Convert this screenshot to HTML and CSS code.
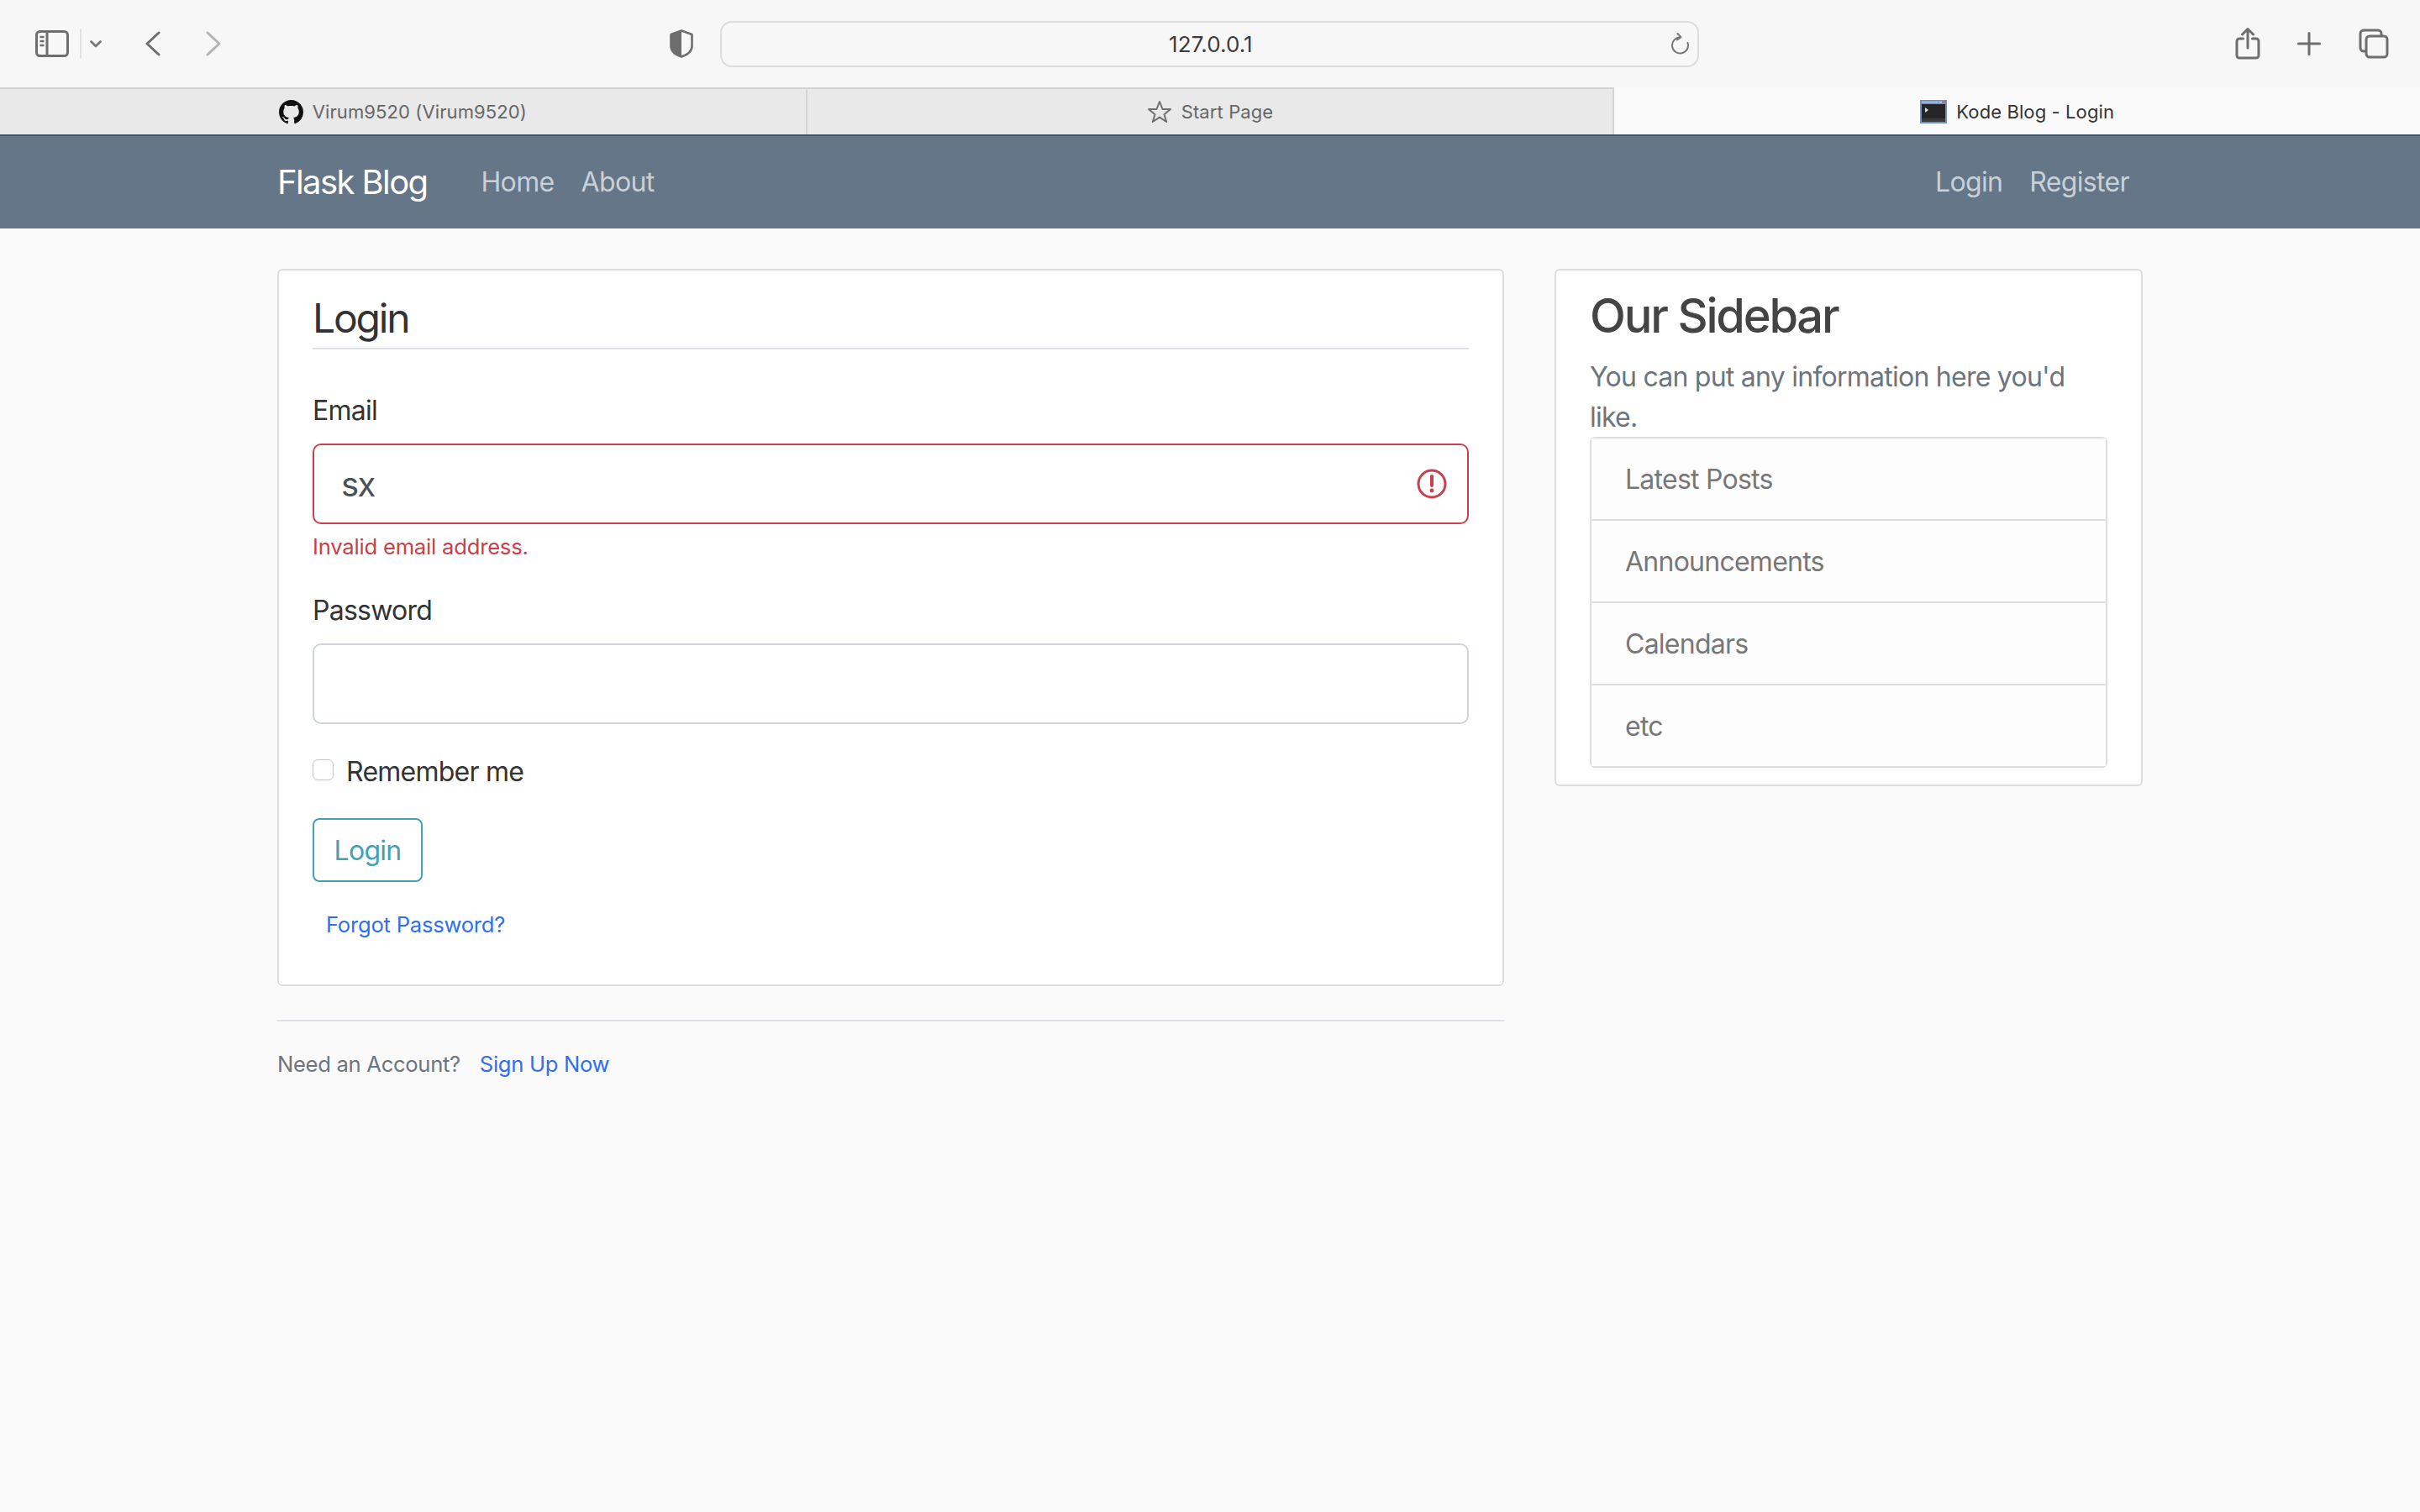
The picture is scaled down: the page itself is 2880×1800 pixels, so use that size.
FILE: index.html
```html
<!DOCTYPE html>
<html lang="en">
<head>
<meta charset="utf-8">
<title>Kode Blog - Login</title>
<link rel="stylesheet" href="styles.css">
</head>
<body>
<header class="toolbar">
  <svg class="ic ic-side" width="40" height="32" viewBox="0 0 40 32" fill="none" stroke="#6e6e6e" stroke-width="3"><rect x="1.5" y="1.5" width="37" height="29" rx="4"/><path d="M14 2v28"/><path d="M5.5 8h5M5.5 13h5M5.5 18h5" stroke-width="2.4"/></svg>
  <span class="tool-div"></span>
  <svg class="ic ic-chev" width="14" height="9" viewBox="0 0 14 9" fill="none" stroke="#777" stroke-width="2.6" stroke-linecap="round" stroke-linejoin="round"><path d="M1.5 1.5 7 7l5.5-5.5"/></svg>
  <svg class="ic ic-back" width="18" height="30" viewBox="0 0 18 30" fill="none" stroke="#6e6e6e" stroke-width="3" stroke-linecap="round" stroke-linejoin="round"><path d="M16 2 2 15l14 13"/></svg>
  <svg class="ic ic-fwd" width="18" height="30" viewBox="0 0 18 30" fill="none" stroke="#b4b4b4" stroke-width="3" stroke-linecap="round" stroke-linejoin="round"><path d="M2 2l14 13L2 28"/></svg>
  <svg class="ic ic-shield" width="28" height="34" viewBox="0 0 28 34"><path d="M14 1.5 26.5 6v14c0 6-5 10-12.500 12.500C6.500 30 1.500 26 1.500 20V6z" fill="none" stroke="#6e6e6e" stroke-width="2.600" stroke-linejoin="round"/><path d="M14 1.500 1.500 6v14c0 6 5 10 12.500 12.500z" fill="#6e6e6e"/></svg>
  <div class="urlbar">
    <span class="url">127.0.0.1</span>
    <svg class="ic-reload" width="24" height="26" viewBox="0 0 24 26" fill="none" stroke="#777" stroke-width="2" stroke-linecap="round" stroke-linejoin="round"><path d="M12.500 5.500A9.500 9.500 0 1 0 21.500 12"/><path d="M9.500 1l4 4.300-4.500 3.200"/></svg>
  </div>
  <svg class="ic ic-share" width="30" height="38" viewBox="0 0 30 38" fill="none" stroke="#6e6e6e" stroke-width="3" stroke-linecap="round" stroke-linejoin="round"><path d="M9.500 13H5a3 3 0 0 0-3 3v17a3 3 0 0 0 3 3h20a3 3 0 0 0 3-3V16a3 3 0 0 0-3-3h-4.500"/><path d="M15 24V2M8.500 8 15 1.500 21.500 8"/></svg>
  <svg class="ic ic-plus" width="28" height="28" viewBox="0 0 28 28" fill="none" stroke="#6e6e6e" stroke-width="3" stroke-linecap="round"><path d="M14 1.500v25M1.500 14h25"/></svg>
  <svg class="ic ic-tabs" width="36" height="36" viewBox="0 0 36 36" fill="none" stroke="#6e6e6e" stroke-width="3" stroke-linejoin="round"><path d="M8 27H6a4 4 0 0 1-4-4V6a4 4 0 0 1 4-4h17a4 4 0 0 1 4 4v2"/><rect x="9" y="9" width="25" height="25" rx="4"/></svg>
</header>

<nav class="tabbar">
  <div class="tab">
    <svg class="fav" width="29" height="29" viewBox="0 0 16 16"><path fill="#111" d="M8 0C3.580 0 0 3.580 0 8c0 3.540 2.290 6.530 5.470 7.590.4.070.55-.17.55-.38 0-.19-.01-.82-.01-1.490-2.010.37-2.530-.49-2.690-.94-.09-.23-.48-.94-.82-1.130-.28-.15-.68-.52-.01-.53.63-.01 1.080.58 1.230.82.72 1.210 1.870.87 2.330.66.07-.52.28-.87.51-1.070-1.780-.2-3.640-.89-3.640-3.950 0-.87.31-1.590.82-2.150-.08-.2-.36-1.020.08-2.120 0 0 .67-.21 2.200.82.64-.18 1.320-.27 2-.27.68 0 1.360.09 2 .27 1.530-1.040 2.200-.82 2.200-.82.44 1.100.16 1.920.08 2.120.51.56.82 1.270.82 2.150 0 3.070-1.870 3.750-3.650 3.950.29.25.54.73.54 1.480 0 1.070-.01 1.930-.01 2.200 0 .21.15.46.55.38A8.013 8.013 0 0 0 16 8c0-4.420-3.580-8-8-8z"/></svg>
    <span>Virum9520 (Virum9520)</span>
  </div>
  <div class="tab">
    <svg class="fav" width="30" height="28" viewBox="0 0 30 28" fill="none" stroke="#6e6e6e" stroke-width="2" stroke-linejoin="round"><path d="M15 2l3.600 9H28l-7.500 6.200L23.200 26 15 20.600 6.800 26l2.700-8.800L2 11h9.400z"/></svg>
    <span>Start Page</span>
  </div>
  <div class="tab tab-active">
    <svg class="fav" width="32" height="28" viewBox="0 0 32 28"><rect width="32" height="28" fill="#6f8fc9"/><rect x="2" y="5" width="28" height="21" fill="#262626"/><rect x="2" y="1.500" width="20" height="2" fill="#a7bde2"/><rect x="23" y="1.500" width="3" height="2" fill="#c3cde0"/><rect x="27" y="1.500" width="3" height="2" fill="#d9655e"/><rect x="2" y="22" width="28" height="4" fill="#3d3d3d"/><path d="M6 9l4 3-4 3z" fill="#ddd"/></svg>
    <span>Kode Blog - Login</span>
  </div>
</nav>

<div class="navbar">
  <div class="nav-inner">
    <a class="brand">Flask Blog</a>
    <a class="nav-link">Home</a>
    <a class="nav-link">About</a>
    <span class="nav-gap"></span>
    <a class="nav-link">Login</a>
    <a class="nav-link">Register</a>
  </div>
</div>

<main class="layout">
  <section class="col-main">
    <form class="card">
      <h2 class="legend">Login</h2>
      <div class="group">
        <label class="label">Email</label>
        <div class="input-wrap">
          <input class="input input-invalid" type="text" value="sx">
          <svg class="invalid-ic" width="36" height="36" viewBox="0 0 36 36"><circle cx="18" cy="18" r="16" fill="none" stroke="#c9404a" stroke-width="3"/><path d="M18 9v11" stroke="#c9404a" stroke-width="4" stroke-linecap="round"/><circle cx="18" cy="26" r="2.400" fill="#c9404a"/></svg>
        </div>
        <div class="feedback">Invalid email address.</div>
      </div>
      <div class="group">
        <label class="label">Password</label>
        <input class="input" type="password">
      </div>
      <div class="group check">
        <input class="checkbox" type="checkbox">
        <label class="check-label">Remember me</label>
      </div>
      <div class="group">
        <button class="btn" type="button">Login</button>
      </div>
      <div class="forgot"><a class="link">Forgot Password?</a></div>
    </form>
    <div class="signup">
      <span>Need an Account?</span>
      <a class="link signup-link">Sign Up Now</a>
    </div>
  </section>
  <aside class="col-side">
    <div class="card">
      <h3 class="side-title">Our Sidebar</h3>
      <p class="side-text">You can put any information here you'd like.</p>
      <ul class="list">
        <li class="list-item">Latest Posts</li>
        <li class="list-item">Announcements</li>
        <li class="list-item">Calendars</li>
        <li class="list-item">etc</li>
      </ul>
    </div>
  </aside>
</main>
</body>
</html>
```

FILE: styles.css
```css
* { box-sizing: border-box; }
html, body { margin: 0; padding: 0; }
body {
  background: #fafafa;
  color: #333;
  font-family: Inter, "Liberation Sans", sans-serif;
  font-size: 32px;
  line-height: 48px;
  letter-spacing: -0.75px;
  min-height: 1800px;
}

/* browser chrome */
.toolbar {
  height: 104px;
  background: #f7f7f7;
  display: flex;
  align-items: center;
  padding-left: 42px;
}
.ic { display: block; flex: none; }
.tool-div { width: 2px; height: 36px; background: #e4e4e4; margin-left: 13px; }
.ic-chev { margin-left: 10px; }
.ic-back { margin-left: 52px; }
.ic-fwd { margin-left: 54px; }
.ic-shield { margin-left: 534px; }
.urlbar {
  width: 1165px;
  height: 55px;
  margin-left: 32px;
  border: 2px solid #dcdcdc;
  border-radius: 14px;
  display: flex;
  align-items: center;
  justify-content: space-between;
  padding-left: 532px;
  padding-right: 9px;
}
.url { font-size: 26px; line-height: 30px; padding-top: 1px; color: #3c3c3c; letter-spacing: 0.1px; }
.ic-share { margin-left: 638px; }
.ic-plus { margin-left: 44px; }
.ic-tabs { margin-left: 45px; }

.tabbar { height: 56px; display: flex; }
.tab {
  flex: 1;
  display: flex;
  align-items: center;
  justify-content: center;
  gap: 11px;
  background: #e9e9e9;
  border-top: 2px solid #d2d2d2;
  border-right: 2px solid #d4d4d4;
  font-size: 22px;
  line-height: 30px;
  letter-spacing: 0.1px;
  color: #666;
}
.tab-active {
  background: #fafafa;
  border: 0;
  color: #333;
  padding-top: 1px;
}

.navbar {
  height: 112px;
  background: #647687;
  border-top: 2px solid #41566b;
}
.nav-inner {
  width: 2220px;
  height: 110px;
  margin: 0 auto;
  display: flex;
  align-items: center;
}
.brand { font-size: 40px; line-height: 60px; color: #fff; font-weight: 400; letter-spacing: -1.6px; margin-right: 48px; }
.nav-link { font-size: 32px; padding: 0 16px; color: #c9d0d6; letter-spacing: -0.65px; }
.nav-gap { flex: 1; }

/* page */
.layout {
  width: 2220px;
  margin: 48px auto 0;
  display: flex;
  gap: 60px;
  align-items: flex-start;
}
.col-main { width: 1460px; flex: none; }
.col-side { width: 700px; flex: none; }
.card {
  display: block;
  background: #fff;
  border: 2px solid #ddd;
  border-radius: 6px;
  padding: 20px 40px;
  margin-bottom: 40px;
}
.legend {
  margin: 0 0 48px;
  padding-top: 1px;
  font-size: 48px;
  line-height: 71px;
  font-weight: 400;
  letter-spacing: -2.2px;
  color: #333;
  border-bottom: 2px solid #dee2e6;
}
.group { margin-bottom: 32px; }
.label { display: block; padding-top: 1px; margin-bottom: 15px; }
.input-wrap { position: relative; }
.input {
  display: block;
  width: 100%;
  height: 96px;
  padding: 16px 32px;
  border: 2px solid #ced4da;
  border-radius: 10px;
  background: #fff;
  font-family: inherit;
  font-size: 40px;
  letter-spacing: -1.5px;
  color: #495057;
  outline: 0;
}
.input-invalid { border-color: #c9404a; }
.invalid-ic { position: absolute; right: 26px; top: 30px; }
.feedback { margin-top: 8px; font-size: 25.6px; line-height: 38.4px; letter-spacing: -0.2px; color: #c9404a; }
.check { display: flex; align-items: center; height: 48px; }
.checkbox {
  appearance: none;
  width: 25px;
  height: 25px;
  margin: 0 15px 4px 0;
  background: #fff;
  border: 1px solid #c4c4c4;
  border-radius: 6px;
  flex: none;
}
.check-label { line-height: 48px; padding-top: 2px; }
.btn {
  display: block;
  width: 131px;
  height: 76px;
  padding: 0;
  background: transparent;
  border: 2px solid #459fb5;
  border-radius: 8px;
  color: #459fb5;
  font-family: inherit;
  font-size: 32px;
  letter-spacing: -0.75px;
}
.forgot { margin: 0 0 31px 16px; font-size: 25.6px; line-height: 38.4px; letter-spacing: -0.23px; }
.link { color: #2f6fed; }
.signup {
  border-top: 2px solid #dee2e6;
  padding-top: 32px;
  font-size: 25.6px;
  line-height: 38.4px;
  letter-spacing: -0.3px;
  color: #6c757d;
}
.signup-link { margin-left: 16px; }
.side-title {
  margin: 0 0 16px;
  padding-top: 2px;
  font-size: 56px;
  line-height: 64px;
  font-weight: 500;
  letter-spacing: -2.2px;
  color: #444;
}
.side-text { margin: 0 0 -1px; padding-top: 1px; color: #6c757d; }
.list { list-style: none; margin: 0; padding: 0; border: 2px solid #ddd; border-radius: 6px; }
.list-item { padding: 25px 40px 23px; color: #777; background: #fdfdfe; border-top: 2px solid #ddd; box-sizing: content-box; height: 48px; }
.list-item:first-child { border-top: 0; }
```
